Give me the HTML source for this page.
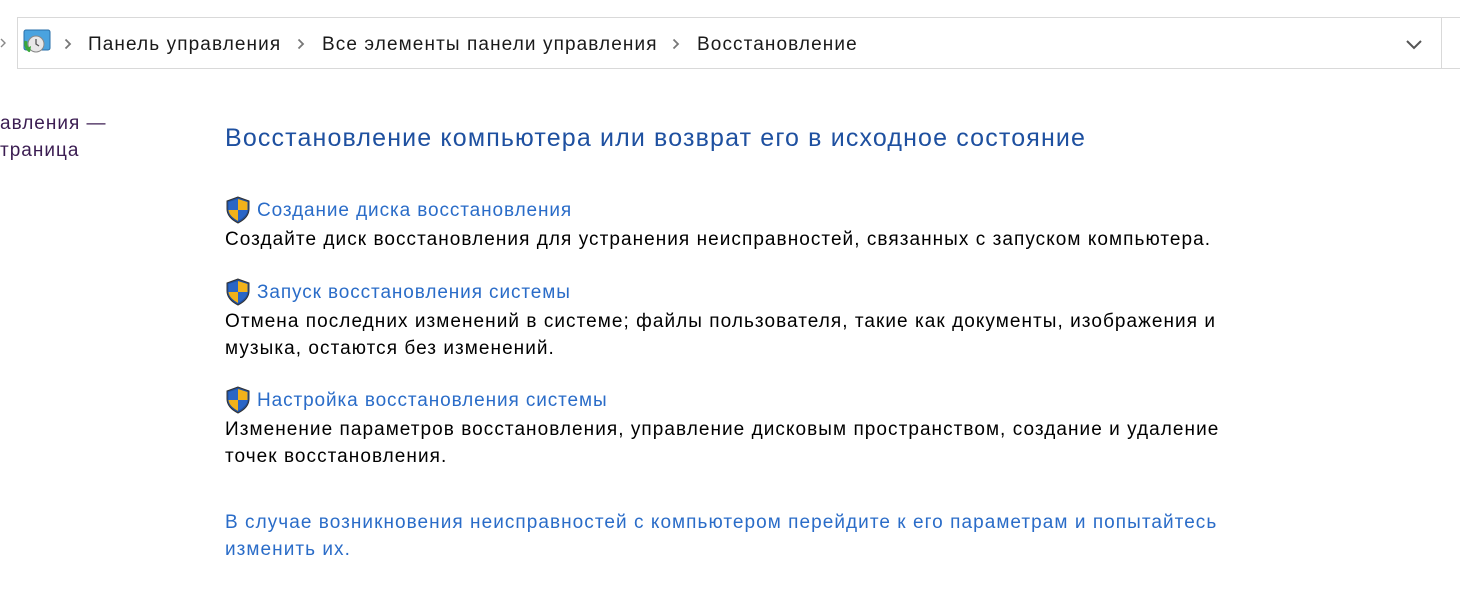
<!DOCTYPE html>
<html><head><meta charset="utf-8"><style>
body{margin:0;width:1460px;height:613px;background:#fff;font-family:"Liberation Sans",sans-serif;position:relative;overflow:hidden;color:#000}
.a{position:absolute;white-space:nowrap}
.bar{position:absolute;left:17px;top:17px;width:1460px;height:52px;border:1px solid #d9d9d9;box-sizing:border-box}
.sep{position:absolute;left:1441px;top:17px;width:1px;height:52px;background:#d9d9d9}
.bc{font-size:19px;color:#1a1a1a;top:34px;letter-spacing:1.1px}
.h{font-size:25px;color:#1e50a0;left:225px;top:124px;letter-spacing:1.15px}
.l{font-size:19px;color:#2a6cc8;left:257px;letter-spacing:0.9px}
.t{font-size:19px;left:225px;line-height:27px;letter-spacing:1.05px}
.side{font-size:19px;color:#3b1d52;left:0;line-height:27px;letter-spacing:1px}
</style></head><body>
<svg class="a" style="left:0;top:38px" width="6" height="10"><path d="M1 1l4 4-4 4" stroke="#888" stroke-width="1.4" fill="none"/></svg>
<div class="bar"></div><div class="sep"></div>
<svg class="a" style="left:22px;top:29px" width="30" height="28" viewBox="0 0 30 28">
<rect x="2" y="1" width="26" height="20" rx="2" fill="#4aa3df" stroke="#2a6fa8"/>
<circle cx="14" cy="15" r="8" fill="#e8e8e8" stroke="#888"/>
<path d="M14 10v5l3 2" stroke="#555" fill="none" stroke-width="1.3"/>
<path d="M4 12a9 9 0 0 0 4 10" stroke="#3aa83a" stroke-width="3" fill="none"/>
<path d="M3 20l5 3 1-6z" fill="#3aa83a"/>
</svg>
<svg class="a" style="left:64px;top:38px" width="8" height="12"><path d="M1.5 1.5l4.5 4.5-4.5 4.5" stroke="#777" stroke-width="1.8" fill="none"/></svg>
<div class="a bc" style="left:88px">Панель управления</div>
<svg class="a" style="left:297px;top:38px" width="8" height="12"><path d="M1.5 1.5l4.5 4.5-4.5 4.5" stroke="#777" stroke-width="1.8" fill="none"/></svg>
<div class="a bc" style="left:322px">Все элементы панели управления</div>
<svg class="a" style="left:672px;top:38px" width="8" height="12"><path d="M1.5 1.5l4.5 4.5-4.5 4.5" stroke="#777" stroke-width="1.8" fill="none"/></svg>
<div class="a bc" style="left:697px">Восстановление</div>
<svg class="a" style="left:1405px;top:39px" width="18" height="12"><path d="M2 2l7 7 7-7" stroke="#555" stroke-width="2" fill="none"/></svg>
<div class="a side" style="top:110px">авления —<br>траница</div>
<div class="a h">Восстановление компьютера или возврат его в исходное состояние</div>
<svg class="a" style="left:225px;top:196px" width="26" height="28" viewBox="0 0 26 28"><path d="M13 1L2 5v8c0 7 5 11 11 14 6-3 11-7 11-14V5z" fill="#1f4f9e" stroke="#333" stroke-width="1"/><path d="M13 3v11H3.5V6z" fill="#2a66c7"/><path d="M13 3l9.5 3v8H13z" fill="#f2b21a"/><path d="M3.5 14H13v11c-5-3-9-6-9.5-11z" fill="#f2b21a"/><path d="M13 14h9.5c-.5 5-4.5 8-9.5 11z" fill="#2a66c7"/></svg>
<div class="a l" style="top:200px">Создание диска восстановления</div>
<div class="a t" style="top:226px">Создайте диск восстановления для устранения неисправностей, связанных с запуском компьютера.</div>
<svg class="a" style="left:225px;top:278px" width="26" height="28" viewBox="0 0 26 28"><path d="M13 1L2 5v8c0 7 5 11 11 14 6-3 11-7 11-14V5z" fill="#1f4f9e" stroke="#333" stroke-width="1"/><path d="M13 3v11H3.5V6z" fill="#2a66c7"/><path d="M13 3l9.5 3v8H13z" fill="#f2b21a"/><path d="M3.5 14H13v11c-5-3-9-6-9.5-11z" fill="#f2b21a"/><path d="M13 14h9.5c-.5 5-4.5 8-9.5 11z" fill="#2a66c7"/></svg>
<div class="a l" style="top:282px">Запуск восстановления системы</div>
<div class="a t" style="top:308px">Отмена последних изменений в системе; файлы пользователя, такие как документы, изображения и<br>музыка, остаются без изменений.</div>
<svg class="a" style="left:225px;top:386px" width="26" height="28" viewBox="0 0 26 28"><path d="M13 1L2 5v8c0 7 5 11 11 14 6-3 11-7 11-14V5z" fill="#1f4f9e" stroke="#333" stroke-width="1"/><path d="M13 3v11H3.5V6z" fill="#2a66c7"/><path d="M13 3l9.5 3v8H13z" fill="#f2b21a"/><path d="M3.5 14H13v11c-5-3-9-6-9.5-11z" fill="#f2b21a"/><path d="M13 14h9.5c-.5 5-4.5 8-9.5 11z" fill="#2a66c7"/></svg>
<div class="a l" style="top:390px">Настройка восстановления системы</div>
<div class="a t" style="top:416px">Изменение параметров восстановления, управление дисковым пространством, создание и удаление<br>точек восстановления.</div>
<div class="a t" style="top:509px;color:#2a6cc8">В случае возникновения неисправностей с компьютером перейдите к его параметрам и попытайтесь<br>изменить их.</div>
</body></html>
